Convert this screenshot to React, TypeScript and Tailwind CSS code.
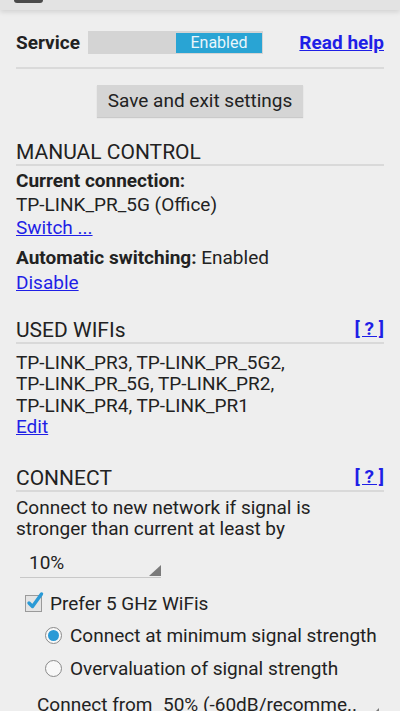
import React from "react";

const H = ({ title, help }: { title: string; help?: boolean }) => (
  <div className="flex items-end justify-between border-b-2 border-[#d9d9d9]">
    <span className="text-[21px] leading-[24px] text-[#222]">{title}</span>
    {help && (
      <a className="font-bold text-[#1f1fe6] underline text-[19px] leading-[22px] whitespace-pre mb-[2px]">[ ? ]</a>
    )}
  </div>
);

export default function App() {
  return (
    <div
      className="w-[400px] h-[711px] overflow-hidden bg-[#eeeeee] text-[#222222] text-[19px] leading-[21.5px]"
      style={{ fontFamily: "Roboto, 'Noto Sans', sans-serif" }}
    >
      <div className="h-[10px] bg-[#e3e3e3] shadow-[0_2px_5px_rgba(0,0,0,0.12)] relative">
        <div className="absolute left-[14px] top-0 w-[29px] h-[3px] rounded-b-[3px] bg-[#4a4a4a]" />
      </div>
      <div className="px-4">
        <div className="flex items-center mt-[21px] h-[23px]">
          <span className="font-bold w-[72px]">Service</span>
          <div className="w-[175px] h-[23px] bg-[#d4d4d4] flex justify-end items-center pr-[1px]">
            <div className="w-[86px] h-[20px] bg-[#29a4d4] text-[#eaf6fb] text-[16px] leading-[20px] text-center">Enabled</div>
          </div>
          <a className="ml-auto font-bold text-[#1f1fe6] underline">Read help</a>
        </div>
        <div className="mt-[13px] border-b-2 border-[#dadada]" />
        <div className="flex justify-center mt-[16px]">
          <div className="w-[206px] h-[32px] bg-[#d5d5d5] shadow-[0_1px_1px_rgba(0,0,0,0.15)] leading-[32px] text-center text-[#222]">
            Save and exit settings
          </div>
        </div>
        <div className="mt-[23px]">
          <H title="MANUAL CONTROL" />
        </div>
        <div className="mt-[4px] font-bold">Current connection:</div>
        <div className="mt-[2.5px]">TP-LINK_PR_5G (Office)</div>
        <div className="mt-[1.5px]"><a className="text-[#1f1fe6] underline">Switch ...</a></div>
        <div className="mt-[8.5px]"><span className="font-bold">Automatic switching:</span> Enabled</div>
        <div className="mt-[3.5px]"><a className="text-[#1f1fe6] underline">Disable</a></div>

        <div className="mt-[24px]">
          <H title="USED WIFIs" help />
        </div>
        <div className="mt-[8px]">
          TP-LINK_PR3, TP-LINK_PR_5G2,
          <br />
          TP-LINK_PR_5G, TP-LINK_PR2,
          <br />
          TP-LINK_PR4, TP-LINK_PR1
        </div>
        <div><a className="text-[#1f1fe6] underline">Edit</a></div>

        <div className="mt-[28px]">
          <H title="CONNECT" help />
        </div>
        <div className="mt-[5px]">
          Connect to new network if signal is
          <br />
          stronger than current at least by
        </div>
        <div className="mt-[9px] ml-[4px] w-[141px] h-[29px] border-b border-[#c8c8c8] relative">
          <span className="absolute left-[9px] top-[3px]">10%</span>
          <svg className="absolute right-0 bottom-[1px]" width="12" height="11" viewBox="0 0 12 11">
            <polygon points="12,0 12,11 0,11" fill="#7a7a7a" />
          </svg>
        </div>
        <div className="mt-[15px] ml-[9px] flex items-center h-[21.5px] gap-[8px]">
          <div className="relative w-[17px] h-[17px] border border-[#9a9a9a] bg-[#e4e4e4]">
            <svg className="absolute -left-[1px] -top-[6px]" width="20" height="20" viewBox="0 0 20 20">
              <path d="M4 13 L7.5 16.5 L16.5 4" stroke="#2a9ad6" strokeWidth="3.4" fill="none" strokeLinecap="round" strokeLinejoin="round" />
            </svg>
          </div>
          <span>Prefer 5 GHz WiFis</span>
        </div>
        <div className="mt-[10.5px] ml-[29px] flex items-center h-[21.5px] gap-[8px]">
          <div className="w-[17px] h-[17px] rounded-full border border-[#8a8a8a] bg-[#f8f8f8] flex items-center justify-center">
            <div className="w-[11px] h-[11px] rounded-full bg-[#2a9ad6]" />
          </div>
          <span>Connect at minimum signal strength</span>
        </div>
        <div className="mt-[11.5px] ml-[29px] flex items-center h-[21.5px] gap-[8px]">
          <div className="w-[17px] h-[17px] rounded-full border border-[#8a8a8a] bg-[#f8f8f8]" />
          <span>Overvaluation of signal strength</span>
        </div>
        <div className="mt-[14.5px] ml-[21px] flex items-center h-[21.5px] whitespace-nowrap">
          <span className="w-[126px]">Connect from</span>
          <div className="relative w-[220px] h-[21.5px]">
            <span>50% (-60dB/recomme..</span>
            <svg className="absolute right-[4px] top-[14px]" width="10" height="10" viewBox="0 0 10 10">
              <polygon points="10,0 10,10 0,10" fill="#7a7a7a" />
            </svg>
          </div>
        </div>
      </div>
    </div>
  );
}
